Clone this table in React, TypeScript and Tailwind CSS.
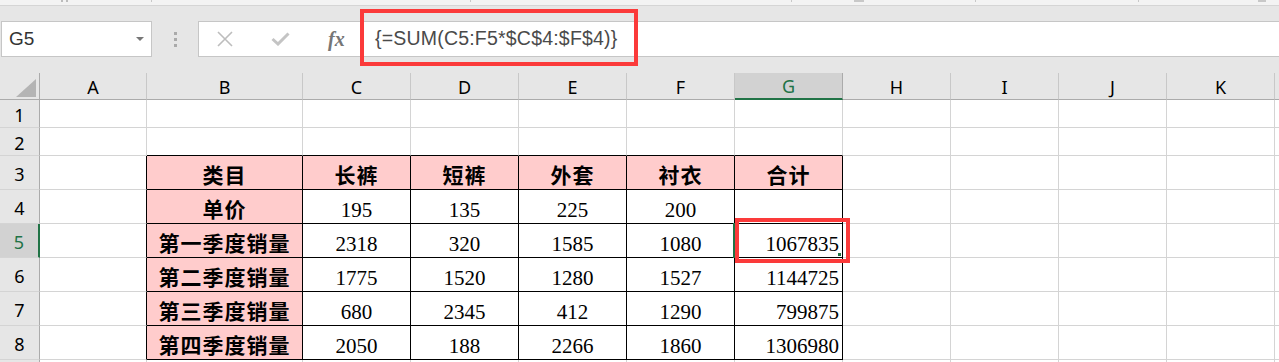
import React from "react";

const cols = [
	{ l: "A", w: 107 },
	{ l: "B", w: 156 },
	{ l: "C", w: 108 },
	{ l: "D", w: 108 },
	{ l: "E", w: 108 },
	{ l: "F", w: 108 },
	{ l: "G", w: 108 },
	{ l: "H", w: 108 },
	{ l: "I", w: 108 },
	{ l: "J", w: 108 },
	{ l: "K", w: 108 },
	{ l: "", w: 108 },
];

const labels = ["类目", "单价", "第一季度销量", "第二季度销量", "第三季度销量", "第四季度销量"];
const heads = ["长裤", "短裤", "外套", "衬衣", "合计"];
const values = [
	["195", "135", "225", "200", ""],
	["2318", "320", "1585", "1080", "1067835"],
	["1775", "1520", "1280", "1527", "1144725"],
	["680", "2345", "412", "1290", "799875"],
	["2050", "188", "2266", "1860", "1306980"],
];

const serif = "font-['Liberation_Serif','Noto_Sans_CJK_SC',serif]";
const ui = "font-['Noto_Sans','Liberation_Sans',sans-serif]";

function cellContent(row: number, col: number) {
	// row: 1-based sheet row, col: index in cols (0 = A)
	if (row < 3 || row > 8 || col < 1 || col > 6) return null;
	const r = row - 3;
	if (col === 1) return { text: labels[r], head: true, align: "center" };
	if (r === 0) return { text: heads[col - 2], head: true, align: "center" };
	const v = values[r - 1][col - 2];
	return { text: v, head: false, align: col === 6 ? "right" : "center" };
}

function Row({ n, h, label }: { n: number; h: number; label: boolean }) {
	const selected = n === 5;
	return (
		<div className="flex" style={{ height: h }}>
			<div
				className={`w-[40px] shrink-0 flex items-center justify-center border-b border-b-[#d4d4d4] text-[18px] pt-[3px] ${ui} ${
					selected
						? "bg-[#d2d2d2] text-[#217346] border-r-2 border-r-[#217346]"
						: "bg-[#e6e6e6] text-black border-r border-r-[#ababab]"
				}`}
			>
				{label ? n : ""}
			</div>
			{cols.map((c, i) => {
				const cc = cellContent(n, i);
				const blackRight = n >= 3 && n <= 8 && i <= 6;
				const blackBottom = n >= 2 && n <= 8 && i >= 1 && i <= 6;
				return (
					<div
						key={i}
						className={`shrink-0 relative flex items-center pt-[7px] border-r border-b ${
							blackRight ? "border-r-black" : "border-r-[#d4d4d4]"
						} ${blackBottom ? "border-b-black" : "border-b-[#d4d4d4]"} ${
							cc && cc.head ? "bg-[#ffcccc]" : "bg-white"
						} ${cc?.align === "right" ? "justify-end pr-[3px]" : "justify-center"}`}
						style={{ width: c.w }}
					>
						{cc && (
							<span
								className={`${serif} text-black text-[21px] leading-none ${
									cc.head ? "font-bold tracking-[1px]" : ""
								}`}
							>
								{cc.text}
							</span>
						)}
						{n === 5 && i === 6 && (
							<>
								<div className="absolute left-[-2px] top-[-1px] bottom-[-1px] w-[2px] bg-[#217346]" />
								<div className="absolute right-[1px] bottom-[1px] w-[3px] h-[3px] bg-[#217346]" />
							</>
						)}
					</div>
				);
			})}
		</div>
	);
}

export default function App() {
	const rows = [
		{ n: 1, h: 28 },
		{ n: 2, h: 28 },
		{ n: 3, h: 34 },
		{ n: 4, h: 34 },
		{ n: 5, h: 34 },
		{ n: 6, h: 34 },
		{ n: 7, h: 34 },
		{ n: 8, h: 34 },
		{ n: 9, h: 34 },
	];

	return (
		<div className="relative w-[1279px] h-[362px] overflow-hidden bg-white">
			{/* Ribbon edge */}
			<div className="relative h-[6px] bg-[#f3f3f3] border-b border-b-[#d5d5d5]">
				<div className="absolute left-[61px] top-0 w-[2px] h-[2px] bg-[#bcbcbc]" />
				<div className="absolute left-[66px] top-0 w-[2px] h-[2px] bg-[#bcbcbc]" />
				<div className="absolute left-[151px] top-0 w-px h-[2px] bg-[#c8c8c8]" />
				<div className="absolute left-[470px] top-0 w-px h-[2px] bg-[#c8c8c8]" />
				<div className="absolute left-[791px] top-0 w-px h-[2px] bg-[#c8c8c8]" />
				<div className="absolute left-[854px] top-0 w-[10px] h-[2px] bg-[#c8c8c8]" />
				<div className="absolute left-[975px] top-0 w-px h-[2px] bg-[#c8c8c8]" />
				<div className="absolute left-[1138px] top-0 w-px h-[2px] bg-[#c8c8c8]" />
				<div className="absolute left-[1258px] top-0 w-[8px] h-[2px] bg-[#c8c8c8]" />
			</div>

			{/* Formula bar */}
			<div className="bg-[#e6e6e6] h-[67px] pt-[15px]">
				<div className="flex h-[36px]">
					<div className="ml-px w-[151px] h-full bg-white border border-[#c6c6c6] flex items-center justify-between pl-[7px] pr-[7px]">
						<span className="font-['Liberation_Sans',sans-serif] text-[19px] text-[#333]">G5</span>
						<svg width="8" height="4" viewBox="0 0 8 4">
							<path d="M0 0 L8 0 L4 4 Z" fill="#777" />
						</svg>
					</div>
					<div className="w-[46px] flex flex-col items-center justify-center gap-[3px]">
						<div className="w-[3px] h-[3px] bg-[#aaaaaa]" />
						<div className="w-[3px] h-[3px] bg-[#aaaaaa]" />
						<div className="w-[3px] h-[3px] bg-[#aaaaaa]" />
					</div>
					<div className="flex-1 h-full bg-white border border-[#c6c6c6] border-r-0 flex items-center">
						<div className="flex items-center w-[166px] pl-[18px] gap-[38px]">
							<svg width="16" height="16" viewBox="0 0 16 16">
								<path d="M1 1 L15 15 M15 1 L1 15" stroke="#bdbdbd" strokeWidth="1.6" fill="none" />
							</svg>
							<svg width="19" height="14" viewBox="0 0 19 14">
								<path d="M1.5 7 L7 12 L17.5 1.5" stroke="#c4c4c4" strokeWidth="3" fill="none" />
							</svg>
							<span className="font-['Liberation_Serif',serif] italic font-bold text-[20px] text-[#767676] leading-none">
								fx
							</span>
						</div>
						<span className="ml-[10px] font-['Liberation_Sans',sans-serif] text-[19.5px] text-[#4a4a4a] tracking-[0.2px]">
							{"{=SUM(C5:F5*$C$4:$F$4)}"}
						</span>
					</div>
				</div>
			</div>

			{/* Column headers */}
			<div className="flex h-[27px] bg-[#e6e6e6]">
				<div className="w-[40px] shrink-0 relative border-r border-r-[#ababab] border-b border-b-[#ababab]">
					<svg className="absolute left-[16px] top-[6px]" width="20" height="18" viewBox="0 0 20 18">
						<path d="M20 0 L20 18 L0 18 Z" fill="#b4b4b4" />
					</svg>
				</div>
				{cols.map((c, i) => {
					const sel = c.l === "G";
					return (
						<div
							key={i}
							className={`shrink-0 flex items-center justify-center pt-[2px] text-[18px] ${ui} border-r ${
								sel
									? "bg-[#d2d2d2] text-[#217346] border-r-[#ababab] border-b-2 border-b-[#217346]"
									: "text-black border-r-[#c8c8c8] border-b border-b-[#ababab]"
							}`}
							style={{ width: c.w }}
						>
							{c.l}
						</div>
					);
				})}
			</div>

			{rows.map((r) => (
				<Row key={r.n} n={r.n} h={r.h} label={r.n <= 8} />
			))}

			{/* Annotation boxes */}
			<div className="absolute left-[360px] top-[9px] w-[278px] h-[57px] border-4 border-[#fb3a3a]" />
			<div className="absolute left-[735px] top-[218px] w-[115px] h-[45px] border-4 border-[#fb3a3a]" />
		</div>
	);
}
